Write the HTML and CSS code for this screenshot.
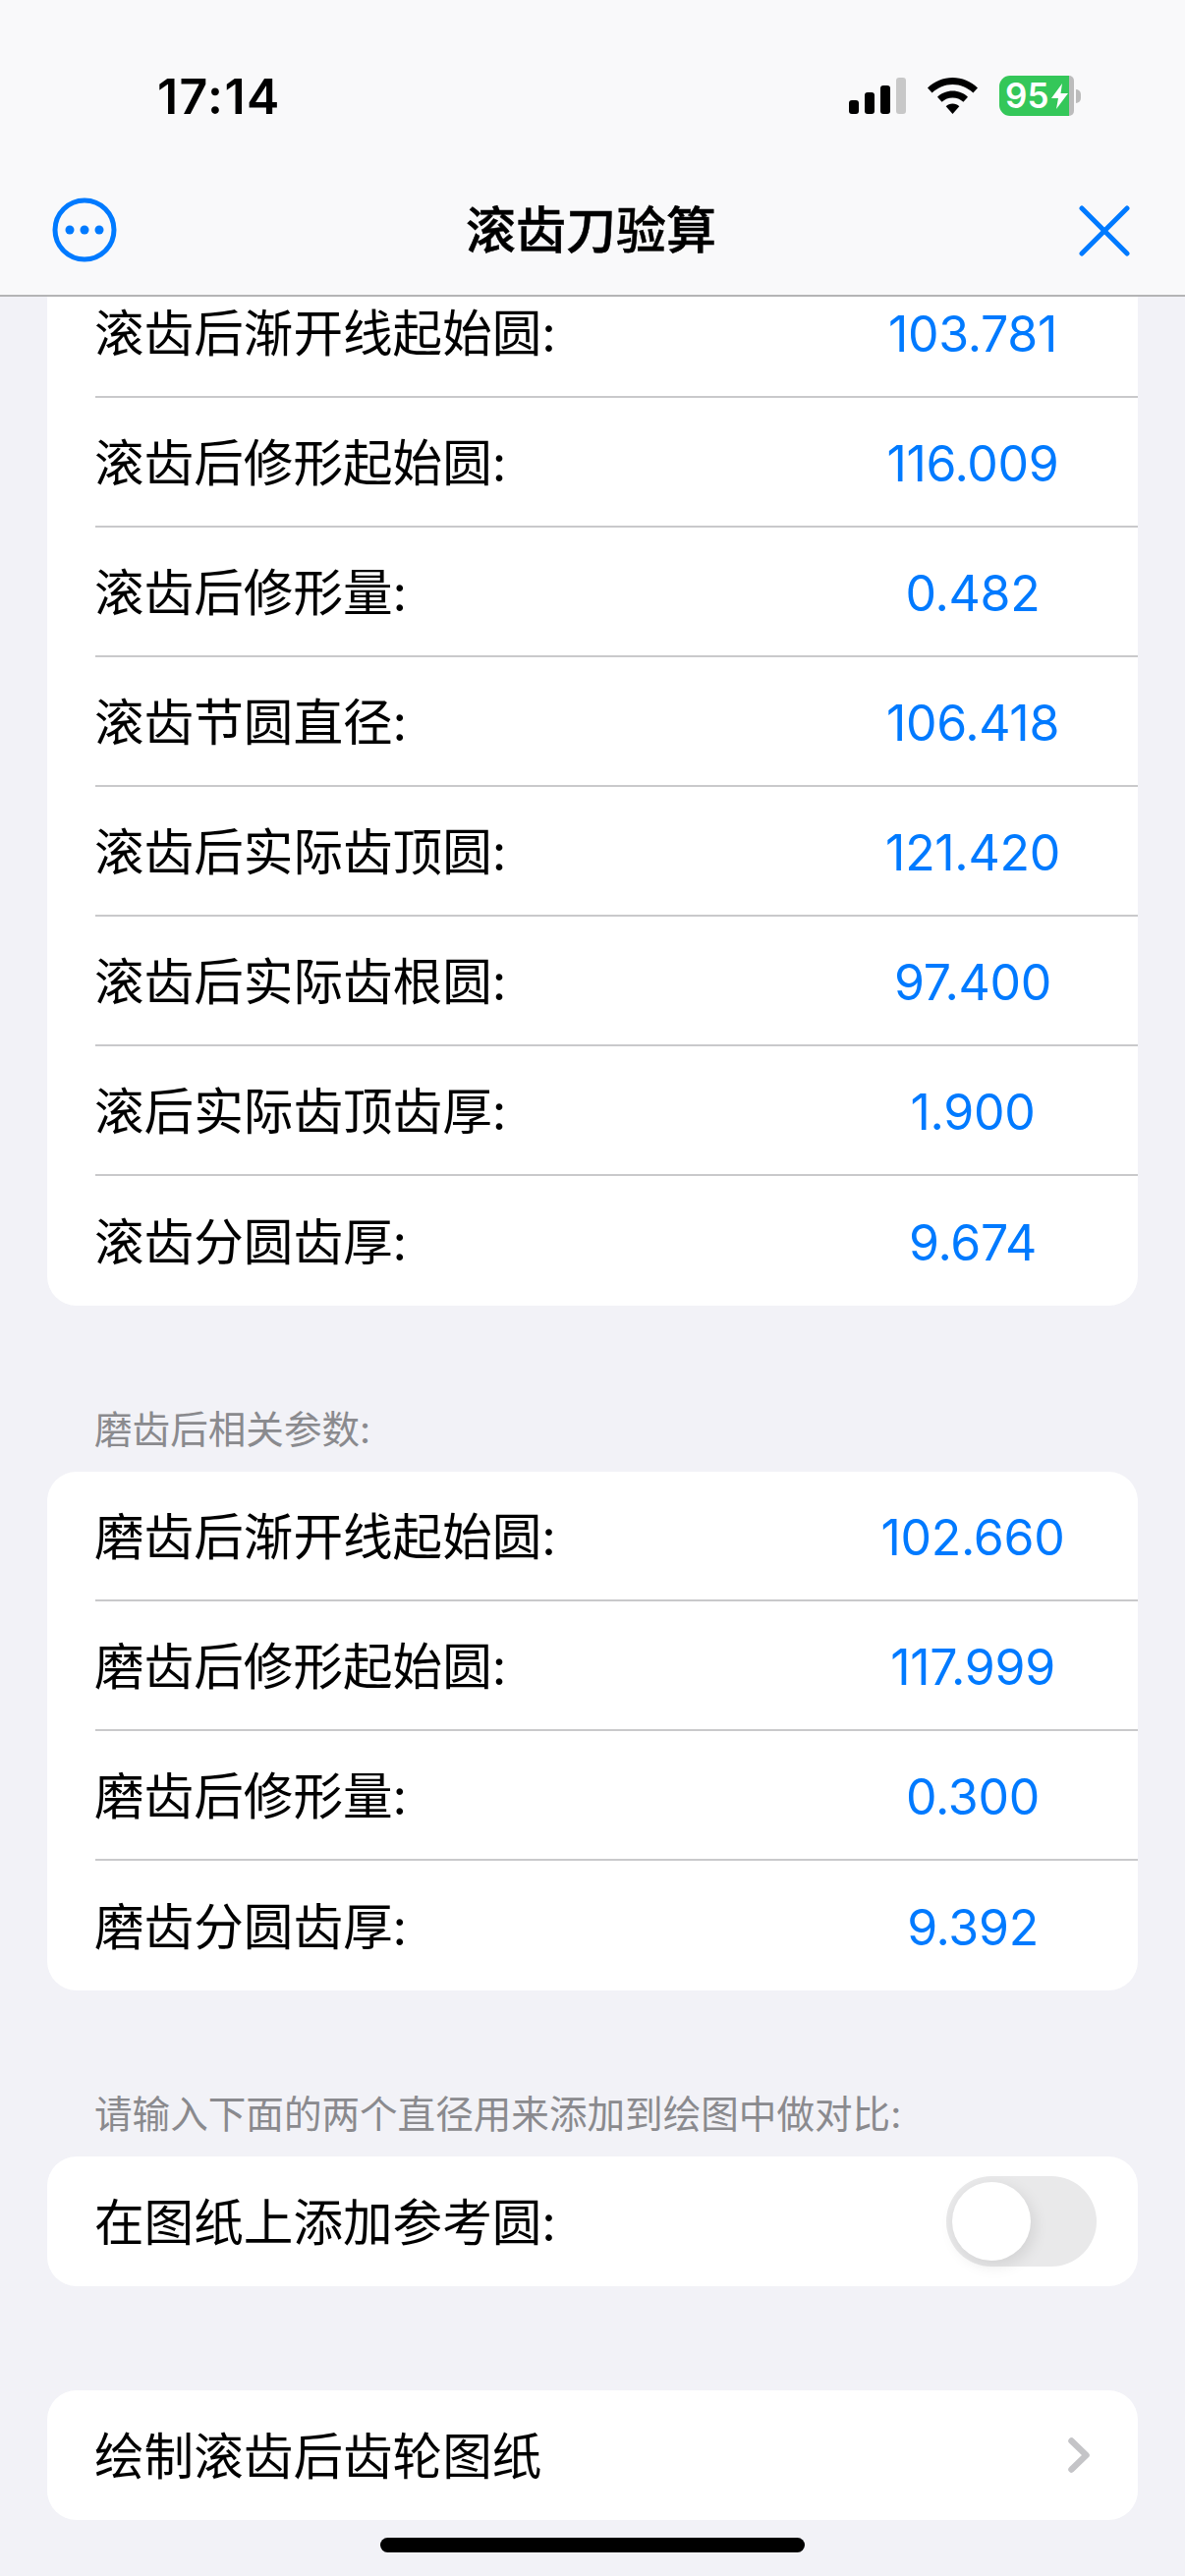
FILE: index.html
```html
<!DOCTYPE html>
<html lang="zh-CN">
<head>
	<meta charset="UTF-8">
	<meta name="viewport" content="width=device-width, initial-scale=1.0">
	<title>滚齿刀验算</title>
	<link rel="stylesheet" href="styles.css">
</head>
<body>
	<div class="top">
		<div class="status">
			<div class="time">17:14</div>
			<div class="status-icons">
				<div class="signal">
					<span class="b1"></span><span class="b2"></span><span class="b3"></span><span class="b4"></span>
				</div>
				<svg class="wifi" width="51" height="37" viewBox="0 0 51 37">
					<path d="M25.5 0C35 0 44 3.8 51 10.4L46.4 15.5C40.6 10.2 33.3 7 25.5 7S10.4 10.2 4.600 15.500L0 10.400C7 3.800 16 0 25.500 0Z" fill="#000"/>
					<path d="M25.5 13.500C31.400 13.500 36.900 15.800 41 19.700L36.400 24.700C33.400 22 29.600 20.500 25.500 20.500S17.600 22 14.600 24.700L10 19.700C14.100 15.800 19.600 13.500 25.500 13.500Z" fill="#000"/>
					<path d="M25.500 26.500C28.200 26.500 30.500 27.400 32.300 29.200L25.500 37L18.700 29.200C20.500 27.400 22.800 26.500 25.500 26.500Z" fill="#000"/>
				</svg>
				<div class="battery">
					<div class="battery-fill">
						<span class="battery-num">95</span>
						<svg class="bolt" width="17" height="26" viewBox="0 0 17 26"><path d="M11 0L0 15H7L5 26L17 10H9.500Z" fill="#fff"/></svg>
					</div>
					<div class="battery-end"></div>
					<div class="battery-nub"></div>
				</div>
			</div>
		</div>
		<div class="nav">
			<div class="nav-side">
				<svg class="nav-more" width="66" height="66" viewBox="0 0 66 66">
					<circle cx="33" cy="33" r="30" fill="none" stroke="#007aff" stroke-width="5"/>
					<circle cx="18" cy="33" r="4.500" fill="#007aff"/>
					<circle cx="33" cy="33" r="4.500" fill="#007aff"/>
					<circle cx="48" cy="33" r="4.500" fill="#007aff"/>
				</svg>
			</div>
			<div class="nav-title">滚齿刀验算</div>
			<div class="nav-side nav-side-right">
				<svg class="nav-close" width="52" height="52" viewBox="0 0 52 52">
					<path d="M3 3L49 49M49 3L3 49" fill="none" stroke="#007aff" stroke-width="5" stroke-linecap="round"/>
				</svg>
			</div>
		</div>
	</div>

	<div class="content">
		<div class="scroll">
			<div class="card">
				<div class="row"><div class="label">滚齿后渐开线起始圆:</div><div class="value">103.781</div></div>
				<div class="row"><div class="label">滚齿后修形起始圆:</div><div class="value">116.009</div></div>
				<div class="row"><div class="label">滚齿后修形量:</div><div class="value">0.482</div></div>
				<div class="row"><div class="label">滚齿节圆直径:</div><div class="value">106.418</div></div>
				<div class="row"><div class="label">滚齿后实际齿顶圆:</div><div class="value">121.420</div></div>
				<div class="row"><div class="label">滚齿后实际齿根圆:</div><div class="value">97.400</div></div>
				<div class="row"><div class="label">滚后实际齿顶齿厚:</div><div class="value">1.900</div></div>
				<div class="row"><div class="label">滚齿分圆齿厚:</div><div class="value">9.674</div></div>
			</div>

			<div class="section-head">磨齿后相关参数:</div>
			<div class="card">
				<div class="row"><div class="label">磨齿后渐开线起始圆:</div><div class="value">102.660</div></div>
				<div class="row"><div class="label">磨齿后修形起始圆:</div><div class="value">117.999</div></div>
				<div class="row"><div class="label">磨齿后修形量:</div><div class="value">0.300</div></div>
				<div class="row"><div class="label">磨齿分圆齿厚:</div><div class="value">9.392</div></div>
			</div>

			<div class="section-head">请输入下面的两个直径用来添加到绘图中做对比:</div>
			<div class="card">
				<div class="row">
					<div class="label">在图纸上添加参考圆:</div>
					<div class="toggle"><div class="knob"></div></div>
				</div>
			</div>

			<div class="card card-action">
				<div class="row">
					<div class="label">绘制滚齿后齿轮图纸</div>
					<svg class="chevron" width="22" height="36" viewBox="0 0 22 36">
						<path d="M3.500 3.500L18.500 18L3.500 32.500" fill="none" stroke="#c4c4c7" stroke-width="6.500" stroke-linecap="round" stroke-linejoin="round"/>
					</svg>
				</div>
			</div>
		</div>
	</div>

	<div class="home-bar"></div>
</body>
</html>
```

FILE: styles.css
```css
html, body { padding: 0; margin: 0; }

body {
	position: relative;
	width: 1206px;
	height: 2622px;
	overflow: hidden;
	display: flex;
	flex-direction: column;
	background-color: #f2f2f7;
	color: #000;
	font-family: Inter, "Noto Sans CJK SC", sans-serif;
}

div { box-sizing: border-box; }

/* status bar + nav */
.top {
	height: 302px;
	flex: none;
	background-color: #f9f9fa;
	border-bottom: 2px solid #b4b4b5;
}

.status {
	height: 190px;
	padding: 66px 106px 0 160px;
	display: flex;
	justify-content: space-between;
}
.time { font-size: 50px; font-weight: 600; line-height: 64px; letter-spacing: 1.400px; }
.status-icons { display: flex; align-items: flex-start; padding-top: 11px; }

.signal { display: flex; align-items: flex-end; gap: 6px; height: 37px; margin-top: 2px; }
.signal span { width: 10px; border-radius: 3px; background-color: #000; }
.signal .b1 { height: 14px; }
.signal .b2 { height: 22px; }
.signal .b3 { height: 29px; }
.signal .b4 { height: 37px; background-color: #c8c8c8; }

.wifi { margin: 2px 0 0 22px; }

.battery { display: flex; align-items: center; height: 41px; margin-left: 22px; }
.battery-fill {
	width: 71px;
	height: 41px;
	display: flex;
	align-items: center;
	padding-left: 6px;
	background-color: #34c759;
	border-radius: 11px 0 0 11px;
}
.battery-num { font-size: 35px; font-weight: 600; line-height: 41px; color: #fff; }
.bolt { margin-left: 3px; flex: none; }
.battery-end { width: 5px; height: 41px; background-color: #bcbcbc; border-radius: 0 9px 9px 0; }
.battery-nub { width: 5px; height: 14px; margin-left: 2px; background-color: #bcbcbc; border-radius: 0 6px 6px 0; }

.nav {
	height: 110px;
	padding: 0 56px 20px 53px;
	display: flex;
	align-items: center;
}
.nav-side { flex: 1; display: flex; }
.nav-side-right { justify-content: flex-end; }
.nav-title { font-size: 51px; font-weight: 500; line-height: 66px; -webkit-text-stroke: 0.5px #000; }
.nav-more { margin-top: -3px; }

/* list */
.content { flex: 1; overflow: hidden; }
.scroll { margin-top: -29px; padding: 0 48px; }

.card { background-color: #fff; border-radius: 30px; overflow: hidden; }
.card-action { margin-top: 106px; }

.row {
	height: 132px;
	margin-left: 49px;
	display: flex;
	align-items: center;
	justify-content: space-between;
	border-bottom: 2px solid #c9c9cb;
}
.row:last-child { border-bottom: none; }

.label { font-size: 50.600px; line-height: 66px; flex: 1; margin-left: -1px; padding-top: 3px; }
.value {
	width: 220px;
	margin-right: 58px;
	padding-top: 3px;
	text-align: center;
	font-size: 50px;
	line-height: 66px;
	letter-spacing: -0.3px;
	color: #007aff;
}

.section-head {
	height: 169px;
	padding: 0 0 15px 48px;
	display: flex;
	align-items: flex-end;
	font-size: 38.600px;
	line-height: 56px;
	color: #8a8a8e;
}

.toggle {
	width: 153px;
	height: 92px;
	margin-right: 42px;
	padding: 6px;
	background-color: #e9e9ea;
	border-radius: 46px;
}
.knob {
	width: 80px;
	height: 80px;
	background-color: #fff;
	border-radius: 50%;
	box-shadow: 3px 5px 16px rgba(0, 0, 0, 0.1);
}

.chevron { margin-right: 49px; }

.home-bar {
	position: absolute;
	left: 387px;
	bottom: 24px;
	width: 432px;
	height: 15px;
	background-color: #000;
	border-radius: 8px;
}
```
